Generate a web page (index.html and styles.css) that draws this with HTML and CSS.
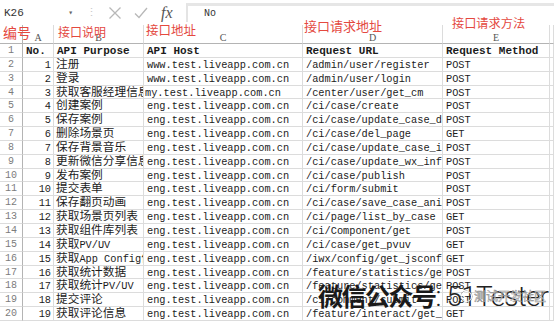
FILE: index.html
```html
<!doctype html>
<html>
  <head>
    <meta charset="utf-8" />
    <title>接口清单</title>
    <link rel="stylesheet" href="styles.css">
  </head>
  <body>
    <div class="formula-bar">
      <div class="name-box">K26<span class="caret">&#9662;</span></div>
      <div class="grip">&#8942;</div>
      <div class="fx-buttons">
        <svg class="btn" width="14" height="14" viewBox="0 0 14 14"><path d="M1.5 1.5 L12.5 12.5 M12.5 1.5 L1.5 12.5" /></svg>
        <svg class="btn" width="14" height="14" viewBox="0 0 14 14"><path d="M1 7.5 L5 11.5 L13 2" /></svg>
        <span class="fx">fx</span>
      </div>
      <div class="formula-input">No</div>
    </div>

    <div class="sheet">
      <div class="row head">
        <div></div><div>A</div><div>B</div><div>C</div><div>D</div><div>E</div><div></div>
      </div>
      <div class="row title">
        <div class="n">1</div><div>No.</div><div>API Purpose</div><div>API Host</div><div>Request URL</div><div>Request Method</div><div></div>
      </div>
      <div class="row">
        <div class="n">2</div><div class="id">1</div><div class="zh">注册</div><div>www.test.liveapp.com.cn</div><div>/admin/user/register</div><div>POST</div><div></div>
      </div>
      <div class="row">
        <div class="n">3</div><div class="id">2</div><div class="zh">登录</div><div>www.test.liveapp.com.cn</div><div>/admin/user/login</div><div>POST</div><div></div>
      </div>
      <div class="row">
        <div class="n">4</div><div class="id">3</div><div class="zh">获取客服经理信息</div><div class="tight">my.test.liveapp.com.cn</div><div>/center/user/get_cm</div><div>POST</div><div></div>
      </div>
      <div class="row">
        <div class="n">5</div><div class="id">4</div><div class="zh">创建案例</div><div>eng.test.liveapp.com.cn</div><div>/ci/case/create</div><div>POST</div><div></div>
      </div>
      <div class="row">
        <div class="n">6</div><div class="id">5</div><div class="zh">保存案例</div><div>eng.test.liveapp.com.cn</div><div>/ci/case/update_case_data</div><div>POST</div><div></div>
      </div>
      <div class="row">
        <div class="n">7</div><div class="id">6</div><div class="zh">删除场景页</div><div>eng.test.liveapp.com.cn</div><div>/ci/case/del_page</div><div>GET</div><div></div>
      </div>
      <div class="row">
        <div class="n">8</div><div class="id">7</div><div class="zh">保存背景音乐</div><div>eng.test.liveapp.com.cn</div><div>/ci/case/update_case_info</div><div>POST</div><div></div>
      </div>
      <div class="row">
        <div class="n">9</div><div class="id">8</div><div class="zh">更新微信分享信息</div><div>eng.test.liveapp.com.cn</div><div>/ci/case/update_wx_info</div><div>POST</div><div></div>
      </div>
      <div class="row">
        <div class="n">10</div><div class="id">9</div><div class="zh">发布案例</div><div>eng.test.liveapp.com.cn</div><div>/ci/case/publish</div><div>POST</div><div></div>
      </div>
      <div class="row">
        <div class="n">11</div><div class="id">10</div><div class="zh">提交表单</div><div>eng.test.liveapp.com.cn</div><div>/ci/form/submit</div><div>POST</div><div></div>
      </div>
      <div class="row">
        <div class="n">12</div><div class="id">11</div><div class="zh">保存翻页动画</div><div>eng.test.liveapp.com.cn</div><div>/ci/case/save_case_animation</div><div>POST</div><div></div>
      </div>
      <div class="row">
        <div class="n">13</div><div class="id">12</div><div class="zh">获取场景页列表</div><div>eng.test.liveapp.com.cn</div><div>/ci/page/list_by_case</div><div>GET</div><div></div>
      </div>
      <div class="row">
        <div class="n">14</div><div class="id">13</div><div class="zh">获取组件库列表</div><div>eng.test.liveapp.com.cn</div><div>/ci/Component/get</div><div>POST</div><div></div>
      </div>
      <div class="row">
        <div class="n">15</div><div class="id">14</div><div class="zh">获取<span class="en">PV/UV</span></div><div>eng.test.liveapp.com.cn</div><div>/ci/case/get_pvuv</div><div>GET</div><div></div>
      </div>
      <div class="row">
        <div class="n">16</div><div class="id">15</div><div class="zh">获取<span class="en">App Config</span>信息</div><div>eng.test.liveapp.com.cn</div><div>/iwx/config/get_jsconfig</div><div>GET</div><div></div>
      </div>
      <div class="row">
        <div class="n">17</div><div class="id">16</div><div class="zh">获取统计数据</div><div>eng.test.liveapp.com.cn</div><div>/feature/statistics/get_data</div><div>POST</div><div></div>
      </div>
      <div class="row">
        <div class="n">18</div><div class="id">17</div><div class="zh">获取统计<span class="en">PV/UV</span></div><div>eng.test.liveapp.com.cn</div><div>/feature/statistics/get_pvuv</div><div>POST</div><div></div>
      </div>
      <div class="row">
        <div class="n">19</div><div class="id">18</div><div class="zh">提交评论</div><div>eng.test.liveapp.com.cn</div><div>/ci/comment/submit</div><div>POST</div><div></div>
      </div>
      <div class="row">
        <div class="n">20</div><div class="id">19</div><div class="zh">获取评论信息</div><div>eng.test.liveapp.com.cn</div><div>/feature/interact/get_comment</div><div>GET</div><div></div>
      </div>
    </div>

    <!-- red notes drawn over the column headers -->
    <span class="note note-no">编号</span>
    <span class="note note-purpose">接口说明</span>
    <span class="note note-host">接口地址</span>
    <span class="note note-url">接口请求地址</span>
    <span class="note note-method">接口请求方法</span>

    <div class="watermark">
      <span class="wm-zh">微信公众号</span><span class="wm-en">: 51Tester</span>
      <span class="wm-overlay"><span class="wm-dot"></span>测试开发社区</span>
    </div>
  </body>
</html>
```

FILE: styles.css
```css
html,
body {
  --grid: #dcdcdc;
  --head-line: #b4b4b4;
  --note: #e4493f;
}

body {
  margin: 0;
  width: 554px;
  height: 321px;
  overflow: hidden;
  position: relative;
  background: #fff;
  color: #1c1c1c;
  font-family: 'Liberation Mono', 'Noto Sans CJK SC', monospace;
}

/* formula bar */

.formula-bar {
  display: flex;
  align-items: center;
  height: 25px;
  box-sizing: border-box;
  padding: 3px 0;
}

.name-box {
  display: flex;
  align-items: center;
  justify-content: space-between;
  width: 78px;
  height: 17px;
  box-sizing: border-box;
  padding: 0 5px 0 4px;
  font-size: 11px;
  color: #333;
}

.caret {
  font-size: 8px;
  color: #666;
}

.grip {
  width: 26px;
  text-align: center;
  color: #c8c8c8;
  font-size: 11px;
}

.fx-buttons {
  display: flex;
  align-items: center;
  gap: 12px;
  width: 82px;
  padding-left: 4px;
  box-sizing: border-box;
}

.btn path {
  fill: none;
  stroke: #b8b8b8;
  stroke-width: 1.3;
}

.fx {
  font-family: 'Liberation Serif', serif;
  font-style: italic;
  font-size: 16px;
  color: #555;
  margin-left: 1px;
}

.formula-input {
  flex: 1;
  height: 19px;
  box-sizing: border-box;
  border-top: 3px solid #e6e6e6;
  border-left: 2px solid #e4e4e4;
  padding: 0 0 0 16px;
  font-size: 10px;
  line-height: 15px;
  color: #333;
}

/* sheet */

.row {
  display: grid;
  grid-template-columns: 23px 31px 90px 159px 140px 107px 1fr;
  height: 13.85px;
}

.row > div {
  box-sizing: border-box;
  border-right: 1px solid var(--grid);
  border-bottom: 1px solid var(--grid);
  padding: 1px 0 0 3px;
  overflow: hidden;
  white-space: nowrap;
  font-size: 10.3px;
  line-height: 12px;
}

.row > div:first-child {
  border-right-color: var(--head-line);
}

.row.head {
  height: 19px;
}

.row.head > div {
  border-bottom-color: var(--head-line);
  text-align: center;
  padding: 7px 0 0;
  font-family: 'Liberation Serif', serif;
  font-size: 10px;
  line-height: 11px;
  color: #555;
}

.row .n {
  padding: 1px 0 0;
  text-align: center;
  font-size: 10px;
  color: #7c7c7c;
}

.row.title > div:not(.n) {
  font-weight: 700;
  font-size: 11px;
}

.row .id {
  text-align: right;
  padding: 1px 2px 0 0;
}

.row .zh {
  font-size: 11.7px;
  padding-left: 2px;
}

.zh .en {
  font-size: 10.3px;
}

.row .tight {
  padding-left: 1px;
}

/* notes */

.note {
  position: absolute;
  font-family: 'Noto Sans CJK SC', sans-serif;
  color: var(--note);
  line-height: 1;
  white-space: nowrap;
}

.note-no {
  left: 3px;
  top: 25px;
  font-size: 14px;
}

.note-purpose {
  left: 58px;
  top: 26px;
  font-size: 12px;
}

.note-host {
  left: 146px;
  top: 24px;
  font-size: 12.5px;
}

.note-url {
  left: 304px;
  top: 19px;
  font-size: 13px;
}

.note-method {
  left: 452px;
  top: 17px;
  font-size: 12.2px;
}

/* watermark */

.watermark {
  position: absolute;
  left: 318px;
  top: 283px;
  white-space: nowrap;
  line-height: 1;
}

.wm-zh {
  font-family: 'Noto Sans CJK SC', sans-serif;
  font-size: 25px;
  font-weight: 600;
  letter-spacing: -1.5px;
  color: #1a1a1a;
}

.wm-en {
  font-family: Roboto, 'Liberation Sans', sans-serif;
  font-size: 28px;
  font-weight: 300;
  letter-spacing: -0.8px;
  color: #222;
}

.wm-overlay {
  position: absolute;
  left: 143px;
  top: 7px;
  display: flex;
  align-items: center;
  gap: 2px;
  font-family: 'Noto Sans CJK SC', sans-serif;
  font-size: 12px;
  color: rgba(255, 255, 255, 0.7);
  -webkit-text-stroke: 0.5px #8a8a8a;
}

.wm-dot {
  width: 9px;
  height: 9px;
  border: 1.5px solid rgba(255, 255, 255, 0.85);
  border-radius: 50%;
  box-shadow: 0 0 0 0.5px #8a8a8a;
}
```
